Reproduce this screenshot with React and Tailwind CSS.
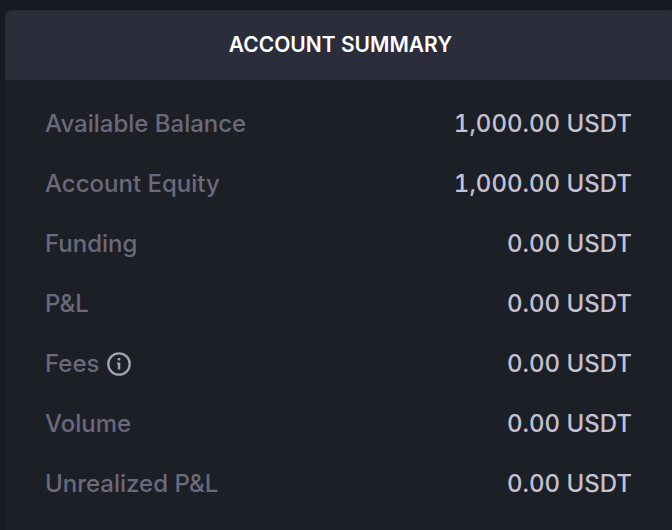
const rows = [
  { label: "Available Balance", value: "1,000.00 USDT" },
  { label: "Account Equity", value: "1,000.00 USDT" },
  { label: "Funding", value: "0.00 USDT" },
  { label: "P&L", value: "0.00 USDT" },
  { label: "Fees", value: "0.00 USDT", info: true },
  { label: "Volume", value: "0.00 USDT" },
  { label: "Unrealized P&L", value: "0.00 USDT" },
];

function InfoIcon() {
  return (
    <svg viewBox="0 0 24 24" className="size-6" fill="none" aria-hidden="true">
      <circle cx="12" cy="12" r="10.7" stroke="currentColor" strokeWidth="2.3" />
      <rect x="10.7" y="6" width="2.6" height="2.4" fill="currentColor" />
      <path d="M10 10.4h3.3v7.2h-2.5v-5.4H10z" fill="currentColor" />
    </svg>
  );
}

export default function App() {
  return (
    <main className="min-h-screen overflow-hidden bg-[#171a22] pt-[10px] pl-[5px] font-['Inter',sans-serif]">
      <section className="-mr-1 flex min-h-[520px] flex-col overflow-hidden rounded-t-lg bg-[#1d1f27]">
        <header className="flex h-[70px] items-center justify-center bg-[#2c2d3b]">
          <h1 className="text-[21px] font-semibold text-white">ACCOUNT SUMMARY</h1>
        </header>
        <dl className="flex flex-col pt-[14px] pr-11 pl-10 text-2xl font-medium">
          {rows.map((row) => (
            <div key={row.label} className="flex h-[60px] items-center justify-between">
              <dt className="flex items-center gap-2 text-[#6b697c]">
                {row.label}
                {row.info && (
                  <button type="button" aria-label="About fees" className="text-[#a3a2b5]">
                    <InfoIcon />
                  </button>
                )}
              </dt>
              <dd className="text-[#c3c1d3] tabular-nums">{row.value}</dd>
            </div>
          ))}
        </dl>
      </section>
    </main>
  );
}
